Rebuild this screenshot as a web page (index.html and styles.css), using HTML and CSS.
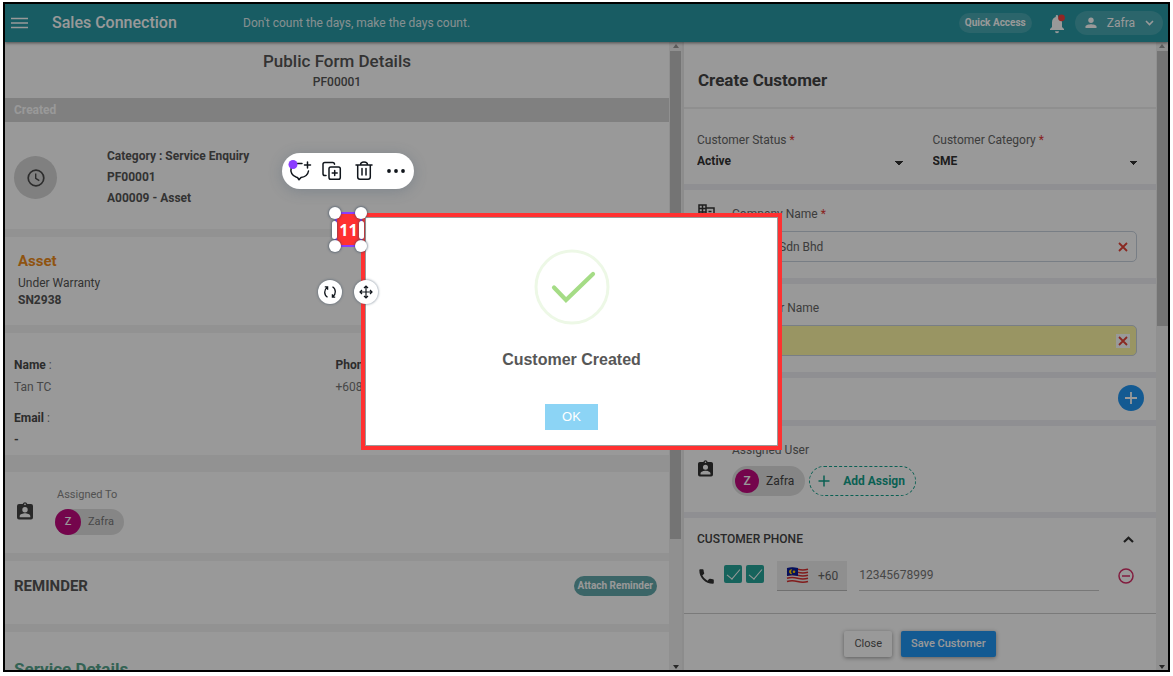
FILE: index.html
```html
<!DOCTYPE html>
<html lang="en">
<head>
<meta charset="utf-8">
<title>Sales Connection</title>
<link rel="stylesheet" href="styles.css">
</head>
<body>
<div class="frame">
  <header class="topbar">
    <button class="icon-btn" aria-label="Menu"><svg width="17" height="12" viewBox="0 0 17 12"><path d="M0 1.500h17M0 6h17M0 10.500h17" stroke="#fff" stroke-width="1.400"/></svg></button>
    <h1 class="brand">Sales Connection</h1>
    <p class="quote">Don't count the days, make the days count.</p>
    <button class="quick">Quick Access</button>
    <button class="icon-btn bell" aria-label="Notifications"><svg width="18" height="20" viewBox="0 0 18 20"><path d="M2 16v-1l2-2V8.500c0-3 1.200-5 3.700-5.600V2.200a1.200 1.200 0 0 1 2.400 0v.7c2.500.6 3.900 2.600 3.900 5.600V13l2 2v1zM7 17.300h4a2 2 0 0 1-4 0z" fill="#fff"/><circle cx="13.500" cy="3.800" r="3.400" fill="#f33f3c"/></svg></button>
    <button class="user"><svg width="12" height="12" viewBox="0 0 12 12"><circle cx="6" cy="3.300" r="2.700" fill="#fff"/><path d="M.5 11V9.600C.5 7.900 4 7.200 6 7.200s5.500.7 5.500 2.400V11z" fill="#fff"/></svg><span>Zafra</span><svg width="9" height="6" viewBox="0 0 9 6"><path d="M1 1l3.500 3.500L8 1" fill="none" stroke="#fff" stroke-width="1.600"/></svg></button>
  </header>

  <div class="panes">
    <main class="pane left-pane">
      <div class="content">
        <div class="form-title"><h2>Public Form Details</h2><p>PF00001</p></div>
        <div class="status">Created</div>
        <section class="summary">
          <span class="clock"><svg width="18" height="18" viewBox="0 0 18 18"><circle cx="9" cy="9" r="7.800" fill="none" stroke="#4a4a4a" stroke-width="1.700"/><path d="M8.700 4.500v4.900l3.600 2.200" fill="none" stroke="#4a4a4a" stroke-width="1.400"/></svg></span>
          <div><p>Category : Service Enquiry</p><p>PF00001</p><p>A00009 - Asset</p></div>
        </section>
        <section class="asset"><h3>Asset</h3><p>Under Warranty</p><p><b>SN2938</b></p></section>
        <section class="contact">
          <div><p><b>Name</b> :</p><p>Tan TC</p></div>
          <div><p><b>Phone</b> :</p><p>+60833</p></div>
          <div><p><b>Email</b> :</p><p><b>-</b></p></div>
        </section>
        <section class="assigned">
          <svg class="badge" width="16" height="18" viewBox="0 0 16 18"><path fill-rule="evenodd" d="M2 2h3.700a2.400 2.400 0 0 1 4.600 0H14q2 0 2 2v11.500q0 2-2 2H2q-2 0-2-2V4q0-2 2-2zM8 1.500a.8.800 0 1 0 0 1.700.8.800 0 0 0 0-1.700zM8 5a2.700 2.700 0 1 0 0 5.400A2.700 2.700 0 0 0 8 5zM2.700 15.300h10.600v-1.200c0-1.900-3.500-2.800-5.300-2.800s-5.300.9-5.300 2.800z"/></svg>
          <div><p>Assigned To</p><span class="chip"><i>Z</i>Zafra</span></div>
        </section>
        <section class="reminder"><h3>REMINDER</h3><button>Attach Reminder</button></section>
        <section class="service"><h3>Service Details</h3></section>
      </div>
      <div class="scroll long"><span class="up"></span><span class="thumb"></span><span class="down"></span></div>
    </main>

    <aside class="pane right-pane">
      <form class="content">
        <h2 class="create">Create Customer</h2>
        <section class="selects">
          <div><label for="status">Customer Status <em>*</em></label><select id="status"><option>Active</option></select></div>
          <div><label for="category">Customer Category <em>*</em></label><select id="category"><option>SME</option></select></div>
        </section>
        <section class="field">
          <svg width="17" height="16" viewBox="0 0 17 16"><path d="M1 1h7v3h8v11H1zM1 4.500h7M1 8h7M1 11.500h7M4.500 1v14M8 4v11M10.500 7.500h3M10.500 11h3" fill="none" stroke="#333" stroke-width="1.500"/></svg>
          <div><label for="company">Company Name <em>*</em></label>
            <div class="entry"><input id="company" value="Sdn Bhd"><button type="button" aria-label="Clear company name"><svg width="10" height="10" viewBox="0 0 10 10"><path d="M1 1l8 8M9 1L1 9" stroke="#e74438" stroke-width="1.800"/></svg></button></div></div>
        </section>
        <section class="field">
          <span></span>
          <div><label for="cname">Customer Name</label>
            <div class="entry yellow"><input id="cname"><button type="button" aria-label="Clear customer name"><svg width="10" height="10" viewBox="0 0 10 10"><path d="M1 1l8 8M9 1L1 9" stroke="#e74438" stroke-width="1.800"/></svg></button></div></div>
        </section>
        <section class="add-row"><button type="button" aria-label="Add"><svg width="12" height="12" viewBox="0 0 12 12"><path d="M6 0v12M0 6h12" stroke="#fff" stroke-width="1.800"/></svg></button></section>
        <section class="field users">
          <svg class="badge" width="15" height="17" viewBox="0 0 16 18"><path fill-rule="evenodd" d="M2 2h3.700a2.400 2.400 0 0 1 4.600 0H14q2 0 2 2v11.500q0 2-2 2H2q-2 0-2-2V4q0-2 2-2zM8 1.500a.8.800 0 1 0 0 1.700.8.800 0 0 0 0-1.700zM8 5a2.700 2.700 0 1 0 0 5.400A2.700 2.700 0 0 0 8 5zM2.700 15.300h10.600v-1.200c0-1.900-3.500-2.800-5.300-2.800s-5.300.9-5.300 2.800z"/></svg>
          <div><p>Assigned User</p>
            <div class="chips"><span class="chip big"><i>Z</i>Zafra</span><button type="button" class="assign"><svg width="12" height="12" viewBox="0 0 12 12"><path d="M6 .5v11M.5 6h11" stroke="#12a18b" stroke-width="1.500"/></svg>Add Assign</button></div></div>
        </section>
        <section class="phone">
          <div class="phone-head"><h3>CUSTOMER PHONE</h3><button type="button" class="icon-btn" aria-label="Collapse"><svg width="11" height="7" viewBox="0 0 11 7"><path d="M1 6l4.500-4.300L10 6" fill="none" stroke="#333" stroke-width="2.200"/></svg></button></div>
          <div class="phone-row">
            <svg width="15" height="15" viewBox="0 0 15 15"><path d="M.3 1.200Q.3.300 1.200.3h2.500q.8 0 .9.900.1 1.500.6 2.700.2.600-.3 1.100L3.300 6.600q1.800 3.400 5.200 5.100l1.600-1.600q.5-.5 1.100-.3 1.200.4 2.700.5.900.1.900.9v2.600q0 .9-.9.900C6.300 14.700.3 8.700.3 1.200z" fill="#333"/></svg>
            <input type="checkbox" checked aria-label="Call"><input type="checkbox" checked aria-label="Message">
            <button type="button" class="country"><svg width="23" height="17" viewBox="0 0 23 17"><path d="M1 1q5-1.500 10.500 0T22 1v15q-5 1.500-10.500 0T1 16z" fill="#eee"/><path d="M1 2.200q5-1.500 10.500 0t10.500 0M1 5.200q5-1.500 10.500 0t10.500 0M1 8.200q5-1.500 10.500 0t10.500 0M1 11.200q5-1.500 10.500 0t10.500 0M1 14.500q5-1.500 10.500 0t10.500 0" fill="none" stroke="#d72e2e" stroke-width="1.500"/><path d="M1 1q5-1.500 11 0v8Q6 7.700 1 9z" fill="#071c9c"/><path d="M6.300 2.500a2.400 2.400 0 1 0 0 4.500 2.700 2.700 0 0 1 0-4.500z" fill="#fc0"/><circle cx="8" cy="4.700" r="1.300" fill="#fc0"/></svg>+60</button>
            <input class="number" aria-label="Phone number" value="12345678999">
            <button type="button" class="icon-btn" aria-label="Remove phone"><svg width="16" height="16" viewBox="0 0 16 16"><circle cx="8" cy="8" r="7" fill="none" stroke="#d92f68" stroke-width="1.500"/><path d="M4 8h8" stroke="#d92f68" stroke-width="1.500"/></svg></button>
          </div>
        </section>
        <footer class="actions"><button type="button" class="close">Close</button><button type="button" class="save">Save Customer</button></footer>
      </form>
      <div class="scroll short"><span class="up"></span><span class="thumb"></span><span class="down"></span></div>
    </aside>
  </div>
  <div class="dim"></div>
</div>

<div class="highlight">
  <div class="dialog" role="dialog" aria-labelledby="done">
    <svg width="76" height="76" viewBox="0 0 76 76"><circle cx="38" cy="38" r="36" fill="none" stroke="#edf8e6" stroke-width="3"/><path d="M20 38.500L32 51 59 25" fill="none" stroke="#a5dc86" stroke-width="4.200" stroke-linecap="round"/></svg>
    <h2 id="done">Customer Created</h2>
    <button>OK</button>
  </div>
</div>

<div class="tools">
  <button aria-label="Comment"><svg width="24" height="24" viewBox="0 0 24 24"><path d="M9.500 4.500H14M3.200 9c-1.200 4 1 8 5.300 9.300l1 .2 1.500 2.300 2-2.300c4-.6 7-3.300 7.500-6.500M19.500 3v6M16.500 6h6" fill="none" stroke="#11161c" stroke-width="1.500" stroke-linecap="round" stroke-linejoin="round"/><circle cx="5" cy="5.500" r="4.500" fill="#8b3dff"/></svg></button>
  <button aria-label="Duplicate"><svg width="24" height="24" viewBox="0 0 24 24"><path d="M6 16.500H4.800A1.800 1.800 0 0 1 3 14.700V5.300a1.800 1.800 0 0 1 1.800-1.800h7.900a1.800 1.800 0 0 1 1.800 1.800M14.700 11.500v5M12.200 14h5" fill="none" stroke="#11161c" stroke-width="1.500" stroke-linecap="round"/><rect x="9" y="8" width="11.300" height="12.300" rx="1.800" fill="none" stroke="#11161c" stroke-width="1.500"/></svg></button>
  <button aria-label="Delete"><svg width="24" height="24" viewBox="0 0 24 24"><path d="M4 6h16M8.500 6c0-4 7-4 7 0M5.700 6v12a2.200 2.200 0 0 0 2.200 2.200h8.200a2.200 2.200 0 0 0 2.200-2.200V6M10 9.500V16M14 9.500V16" fill="none" stroke="#11161c" stroke-width="1.500" stroke-linecap="round"/></svg></button>
  <button aria-label="More"><svg width="24" height="24" viewBox="0 0 24 24" fill="#11161c"><circle cx="5" cy="12" r="1.900"/><circle cx="12" cy="12" r="1.900"/><circle cx="19" cy="12" r="1.900"/></svg></button>
</div>

<div class="step">11<span class="knob tl"></span><span class="knob tr"></span><span class="knob bl"></span><span class="knob br"></span><span class="side ls"></span><span class="side rs"></span></div>
<button class="round rotate" aria-label="Rotate"><svg width="14" height="14" viewBox="0 0 14 14"><path d="M4.500 12.300C.8 10 .8 4.700 4.300 2.200M1.800 1.800h2.800v3M9.500 1.700c3.700 2.300 3.700 7.600.2 10.100M12.200 12.200H9.400v-3" fill="none" stroke="#11161c" stroke-width="1.300"/></svg></button>
<button class="round move" aria-label="Move"><svg width="14" height="14" viewBox="0 0 14 14"><path d="M7 1.500v11M1.500 7h11M5 3l2-2 2 2M5 11l2 2 2-2M3 5L1 7l2 2M11 5l2 2-2 2" fill="none" stroke="#11161c" stroke-width="1.200"/></svg></button>
</body>
</html>
```

FILE: styles.css
```css
* { box-sizing: border-box; margin: 0; }
body { height: 100vh; padding: 2px 3px 4px; display: flex; background: #fff; position: relative; overflow: hidden; color: #555; font: 12px/20px Roboto, sans-serif; }
button, input, select { font: inherit; color: inherit; border: 0; background: none; padding: 0; }
h1, h2, h3, b { font-weight: 700; }
p { font-size: inherit; }
em { color: #e53935; font-style: normal; }
svg { display: block; flex: none; }
.frame { flex: 1; min-width: 0; border: 2px solid #000; position: relative; display: flex; flex-direction: column; overflow: hidden; }
.dim { position: absolute; inset: 0; background: rgba(0, 0, 0, .4); z-index: 2; }

.topbar { flex: none; height: 38px; display: flex; align-items: center; padding: 0 5px 0 6px; background: #2899a5; color: #fff; box-shadow: 0 1px 3px rgba(0, 0, 0, .5); z-index: 1; }
.brand { margin-left: 24px; width: 191px; font-size: 16px; font-weight: 500; }
.brand, .quote { white-space: nowrap; }
.quote { flex: 1; opacity: .85; }
.quick { height: 20px; padding: 0 6px; border-radius: 10px; background: rgba(255, 255, 255, .15); font-size: 10px; line-height: 20px; font-weight: 700; }
.bell { margin: 2px 9px 0 16px; }
.user { height: 24px; padding: 0 9px 0 10px; border-radius: 12px; background: rgba(255, 255, 255, .15); display: flex; align-items: center; gap: 10px; }

.panes { flex: 1; min-height: 0; display: grid; grid-template-columns: 679fr 484fr; background: #fff; }
.pane { min-width: 0; min-height: 0; display: flex; overflow: hidden; }
.content { flex: 1; min-width: 0; }
.left-pane { border-right: 2px solid #e9e9e9; }

.scroll { width: 12px; flex: none; background: #f1f1f1; display: flex; flex-direction: column; align-items: center; padding: 2px 0 1px; }
.left-pane .scroll { width: 13px; }
.up, .down { border: 3px solid transparent; }
.up { border-top-width: 0; border-bottom: 4px solid #999; }
.down { border-bottom-width: 0; border-top: 4px solid #444; margin-top: auto; }
.thumb { width: 11px; background: #c1c1c1; margin-top: 3px; }
.long .thumb { height: 78%; }
.short .thumb { height: 44%; }

.form-title { height: 56px; padding-top: 8px; text-align: center; }
.form-title h2 { font-size: 17px; line-height: 22px; font-weight: 500; }
.form-title p { font-weight: 500; }
.status { height: 24px; padding-left: 9px; line-height: 24px; background: #d5d5d5; color: #fff; font-weight: 700; }
.left-pane section { border-bottom: 8px solid #f4f4f4; }
.summary { display: flex; align-items: center; gap: 50px; padding: 24px 9px 20px; font-weight: 700; line-height: 21px; }
.clock { width: 43px; height: 43px; border-radius: 50%; background: #d5d5d5; display: grid; place-items: center; }
.asset { padding: 14px 13px 16px; line-height: 17px; }
.asset h3 { font-size: 15px; line-height: 20px; margin-bottom: 4px; color: #ef8c1c; }
.contact { display: grid; grid-template-columns: 1fr 1fr; row-gap: 9px; padding: 21px 12px 4px 9px; line-height: 22px; color: #777; }
.contact b { color: #4a4a4a; }
.left-pane .contact { border-bottom-width: 17px; }
.assigned { display: flex; align-items: center; gap: 22px; padding: 14px 12px 18px; font-size: 11px; color: #888; }
.assigned p { padding-left: 2px; line-height: 18px; margin-bottom: 5px; }
.badge { fill: #444; }
.chip { display: inline-flex; align-items: center; gap: 7px; height: 26px; padding-right: 10px; border-radius: 13px; background: #e0e0e0; color: #777; vertical-align: top; }
.chip i { width: 26px; height: 26px; border-radius: 50%; background: #c1097f; color: #fff; font-style: normal; font-weight: 500; display: grid; place-items: center; }
.reminder { display: flex; justify-content: space-between; align-items: center; padding: 14px 12px 27px 9px; }
.reminder h3 { font-size: 15px; line-height: 22px; }
.reminder button { height: 20px; padding: 0 4px; border-radius: 10px; background: #63a9ac; color: #fff; font-size: 10px; font-weight: 700; line-height: 20px; }
.service { padding: 26px 9px; }
.service h3 { font-size: 17px; line-height: 22px; color: #55a58c; }

.right-pane section { border-bottom: 6px solid #eeeff3; }
.create { height: 67px; padding: 27px 14px 0; font-size: 17px; line-height: 22px; color: #444; border-bottom: 2px solid #eee; }
.selects { display: grid; grid-template-columns: 1fr 1fr; gap: 29px; padding: 21px 17px 13px 13px; color: #666; }
.selects label, .selects select { display: block; }
.selects select { width: 100%; height: 20px; margin-top: 1px; appearance: none; color: #333; font-weight: 700; background: linear-gradient(45deg, transparent 50%, #333 50%) right 5px top 10px / 4px 4px no-repeat, linear-gradient(315deg, transparent 50%, #333 50%) right 1px top 10px / 4px 4px no-repeat; }
.field { display: grid; grid-template-columns: 34px 1fr; padding: 14px 19px 16px 14px; color: #666; }
.field label, .users p { display: block; }
.entry { display: flex; align-items: center; height: 31px; margin: 7px 0 0 3px; border: 1px solid #c8d2de; border-radius: 5px; padding-right: 6px; }
.entry input { flex: 1; min-width: 0; height: 28px; padding-left: 43px; }
.entry button { width: 14px; height: 14px; display: grid; place-items: center; background: #fff; }
.yellow { background: #fff9a5; }
.add-row { display: flex; justify-content: flex-end; padding: 7px 12px 9px; }
.add-row button { width: 26px; height: 26px; border-radius: 50%; background: #2196f3; display: grid; place-items: center; }
.users { align-items: center; }
.users .badge { fill: #333; }
.users p { margin-bottom: 6px; }
.chips { display: flex; gap: 4px; }
.big { height: 30px; border-radius: 15px; border: 3px solid #e0e0e0; color: #444; padding-right: 8px; }
.big i { width: 24px; height: 24px; }
.assign { display: flex; align-items: center; gap: 13px; height: 30px; padding: 0 10px 0 8px; border: 1px dashed #12a18b; border-radius: 15px; color: #12a18b; font-weight: 700; }
.right-pane .phone { padding: 11px 17px 22px 13px; border-bottom: 1px solid #ccc; }
.phone-head { display: flex; justify-content: space-between; align-items: center; padding-right: 5px; color: #444; }
.phone-head h3 { font-size: 12px; font-weight: 500; }
.phone-row { display: flex; align-items: center; margin-top: 12px; padding: 0 5px 0 2px; }
.phone-row input[type=checkbox] { appearance: none; width: 18px; height: 18px; margin: 0 0 4px 4px; border-radius: 2px; background: #26a69a; display: grid; place-items: center; }
.phone-row svg + input[type=checkbox] { margin-left: 10px; }
.phone-row input[type=checkbox]::after { content: ""; width: 6px; height: 12px; border: solid #fff; border-width: 0 1px 1px 0; transform: rotate(40deg); margin-bottom: 3px; }
.country { display: flex; align-items: center; gap: 9px; height: 30px; margin: 0 12px 0 13px; padding: 0 9px; background: #eee; border-bottom: 1px solid #bbb; color: #666; }
.number { flex: 1; min-width: 0; height: 30px; margin-right: 19px; padding-bottom: 2px; border-bottom: 1px solid #c8c8c8; color: #777; }
.actions { display: flex; justify-content: center; gap: 9px; padding-top: 17px; }
.actions button { height: 26px; padding: 0 10px; border-radius: 2px; box-shadow: 0 1px 4px rgba(0, 0, 0, .4); font-size: 11px; }
.close { background: #fff; }
.actions .save { background: #2196f3; color: #fff; font-weight: 500; }

/* annotation layer */
.highlight { position: absolute; left: 361px; top: 213px; width: 421px; height: 237px; border: 4px solid #ff3131; padding: 1px; background: #999; z-index: 3; }
.dialog { height: 100%; background: #fff; display: flex; flex-direction: column; align-items: center; padding-top: 31px; font-family: "Liberation Sans", Arial, sans-serif; }
.dialog h2 { margin: 24px 0 33px; font-size: 16px; line-height: 22px; color: #575757; }
.dialog button { width: 53px; height: 26px; background: #8cd4f5; color: #fff; font-size: 13px; }
.tools { position: absolute; left: 282px; top: 153px; height: 36px; padding: 0 6px; border-radius: 18px; background: #fff; display: flex; align-items: center; gap: 8px; box-shadow: 0 2px 14px rgba(64, 87, 109, .3); z-index: 4; }
.step { position: absolute; left: 335px; top: 212px; width: 27px; height: 35px; background: #ff3131; border: 2px solid #8b3dff; color: #fff; font: 700 16px/32px "Open Sans", sans-serif; text-align: center; z-index: 4; }
.knob, .side { position: absolute; background: #fff; border-radius: 6px; box-shadow: 0 0 2px 1px rgba(57, 76, 96, .5); }
.knob { width: 12px; height: 12px; }
.side { width: 5px; height: 18px; top: 7px; }
.tl, .bl { left: -8px; }
.tr, .br { right: -7px; }
.tl, .tr { top: -7px; }
.bl, .br { bottom: -7px; }
.ls { left: -5px; }
.rs { right: -4px; }
.round { position: absolute; top: 280px; width: 24px; height: 24px; border-radius: 50%; background: #fff; display: grid; place-items: center; box-shadow: 0 0 2px 1px rgba(57, 76, 96, .35); z-index: 4; }
.rotate { left: 318px; }
.move { left: 354px; }
```
